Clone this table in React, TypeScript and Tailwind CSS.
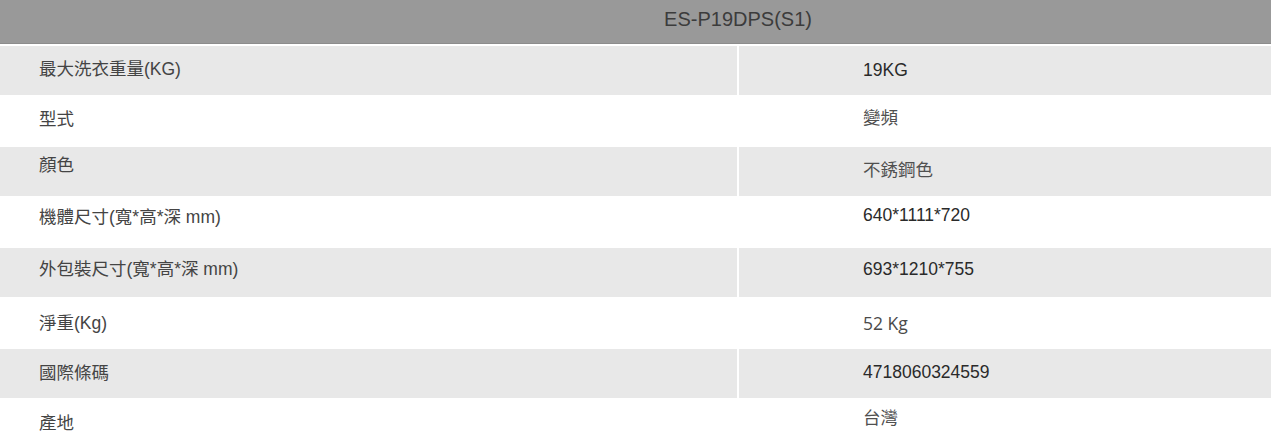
import React from "react";

const SHIFT: Record<number, string> = {
  0: "",
  1: "pb-[2px]",
  2: "pb-[4px]",
  3: "pb-[6px]",
  4: "pb-[8px]",
  5: "pb-[10px]",
  6: "pb-[12px]",
  7: "pb-[14px]",
};

type Row = {
  label: string;
  value: string;
  ls: number;
  rs: number;
  latin?: boolean;
  open?: boolean;
};

const rows: Row[] = [
  { label: "最大洗衣重量(KG)", value: "19KG", ls: 1, rs: 0, latin: true },
  { label: "型式", value: "變頻", ls: 2, rs: 3 },
  { label: "顏色", value: "不銹鋼色", ls: 6, rs: 1 },
  { label: "機體尺寸(寬*高*深 mm)", value: "640*1111*720", ls: 5, rs: 7, latin: true },
  { label: "外包裝尺寸(寬*高*深 mm)", value: "693*1210*755", ls: 3, rs: 3, latin: true },
  { label: "淨重(Kg)", value: "52 Kg", ls: 0, rs: 0, open: true },
  { label: "國際條碼", value: "4718060324559", ls: 0, rs: 1, latin: true },
  { label: "產地", value: "台灣", ls: 1, rs: 6 },
];

export default function App() {
  return (
    <div
      className="w-full h-[448px] overflow-hidden bg-white"
      style={{ fontFamily: '"Liberation Sans", "Noto Sans CJK TC", sans-serif' }}
    >
      <div className="w-[1646px] -ml-[85px] flex flex-col gap-[2px]">
        <div className="h-[44px] bg-[#999999] border-b border-[#8c8c8c] flex justify-center pt-[5px]">
          <span className="text-[20px] leading-[28px] text-[#3c3c3c]">ES-P19DPS(S1)</span>
        </div>
        {rows.map((r, i) => {
          const bg = i % 2 === 0 ? "bg-[#e8e8e8]" : "bg-white";
          return (
            <div key={i} className="grid grid-cols-[822px_822px] gap-x-[2px] h-[48.5px]">
              <div className={`${bg} flex items-center pl-[124px] ${SHIFT[r.ls]}`}>
                <span className="text-[17.5px] leading-[24px] text-[#444444]">{r.label}</span>
              </div>
              <div className={`${bg} flex items-center pl-[124px] ${SHIFT[r.rs]}`}>
                {r.open ? (
                  <span
                    className="text-[17.5px] leading-[24px] text-[#4a4a4a]"
                    style={{ fontFamily: '"Open Sans", sans-serif' }}
                  >
                    {r.value}
                  </span>
                ) : (
                  <span
                    className={`text-[17.5px] leading-[24px] ${r.latin ? "text-[#2a2a2a]" : "text-[#505050]"}`}
                  >
                    {r.value}
                  </span>
                )}
              </div>
            </div>
          );
        })}
      </div>
    </div>
  );
}
